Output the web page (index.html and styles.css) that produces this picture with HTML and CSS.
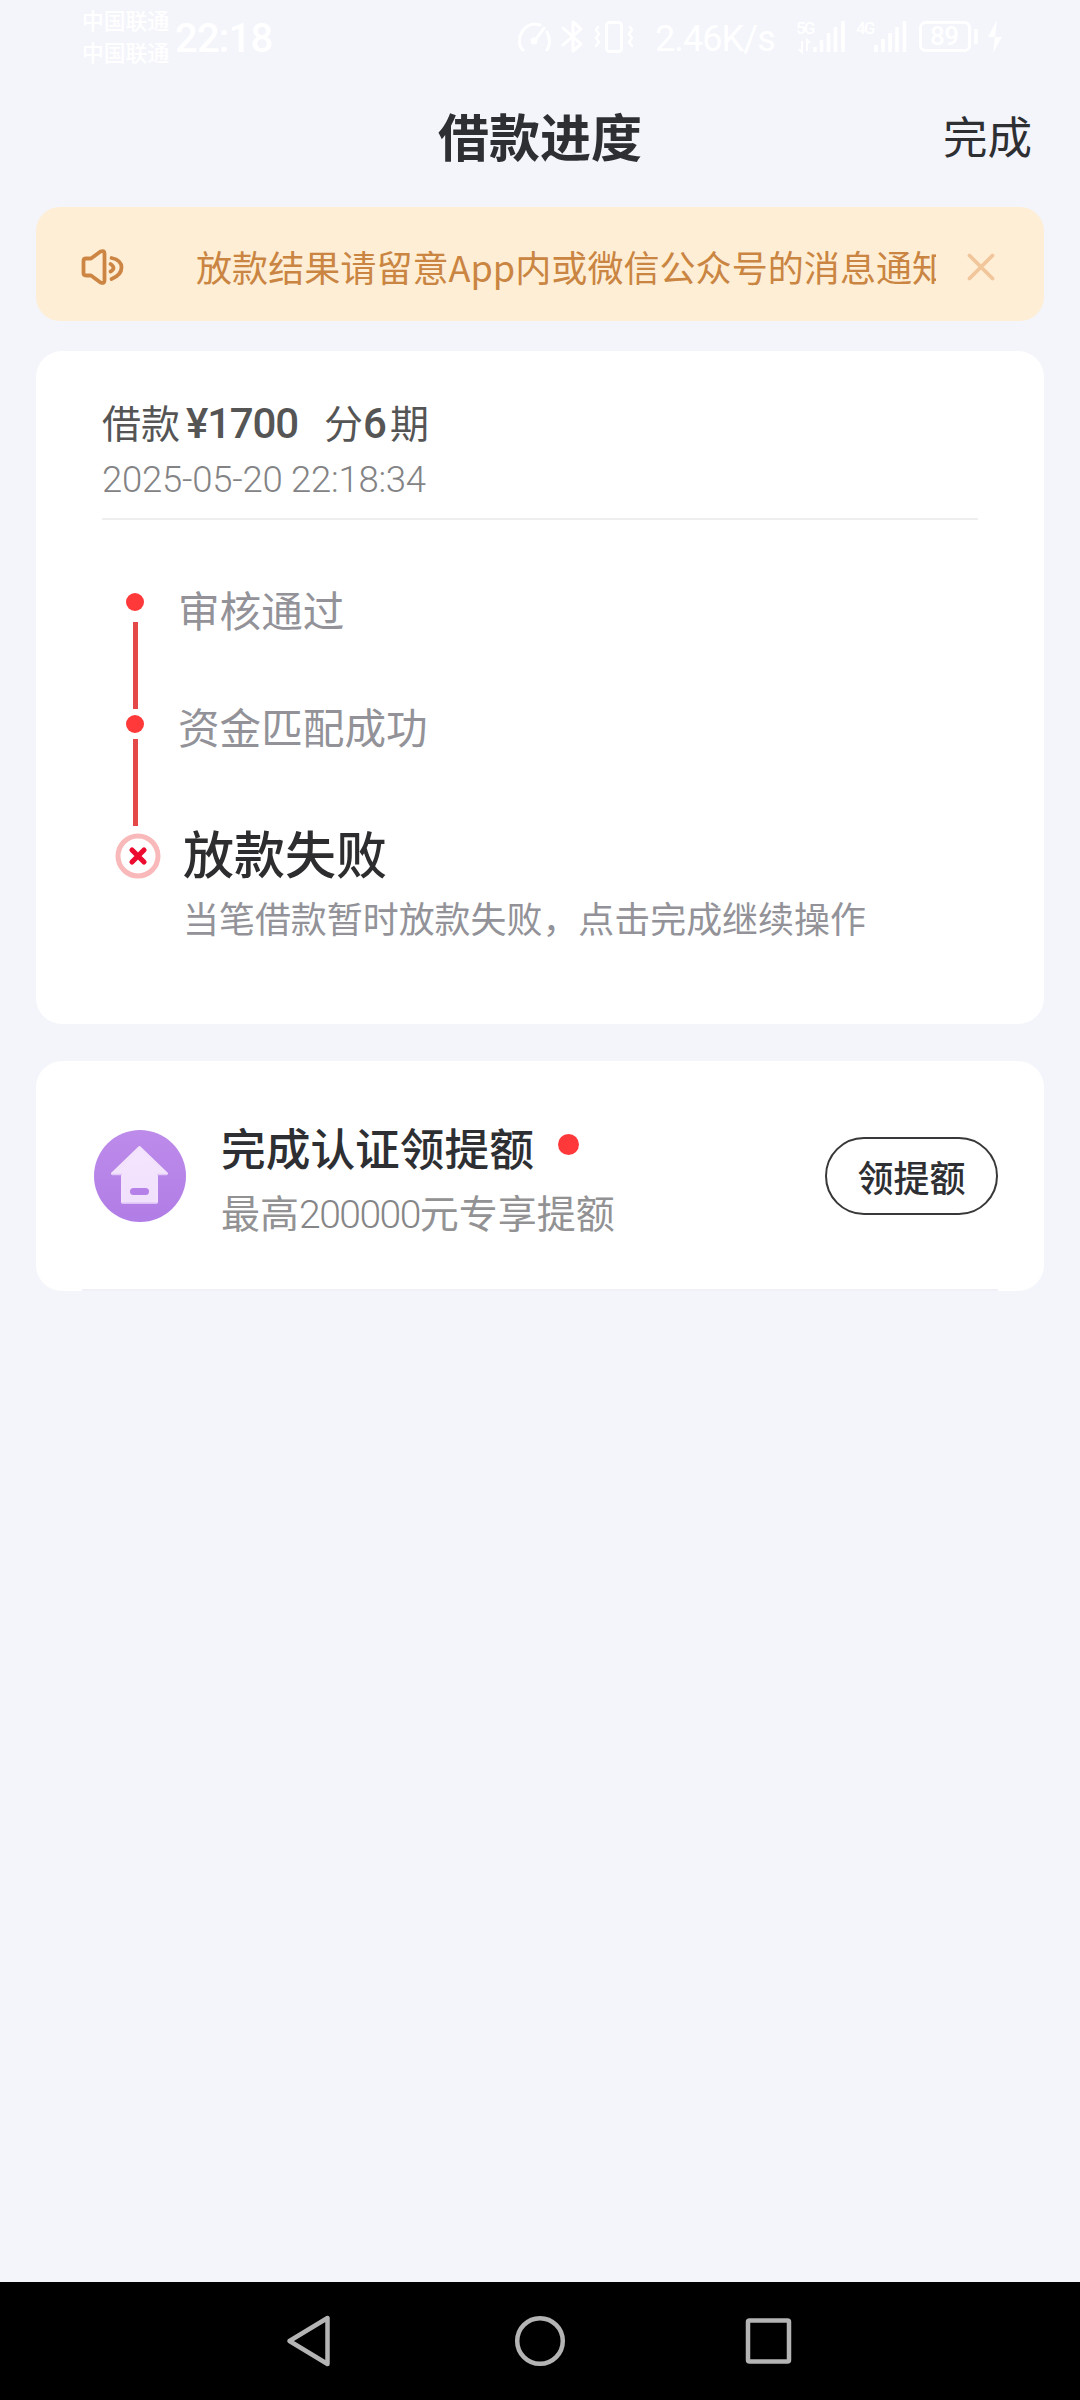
FILE: index.html
```html
<!DOCTYPE html>
<html lang="zh-CN">
<head>
<meta charset="utf-8">
<title>借款进度</title>
<link rel="stylesheet" href="styles.css">
</head>
<body>
<div class="statusbar">
  <div class="carriers"><span>中国联通</span><span>中国联通</span></div>
  <div class="clock">22:18</div>
  <svg class="status-left" width="116" height="36" viewBox="517 19 116 36" fill="none" stroke="#fff" stroke-width="3" stroke-linecap="round">
    <path d="M523 50 Q518 46 520 36 Q524 25 534 24 L540 25 M547 32 Q552 42 547 50 M534 42 L544 28"/>
    <circle cx="534" cy="41" r="2"/>
    <path d="M563 28 L581 44 L573 51 V22 L581 29 L563 45" stroke-linejoin="round"/>
    <rect x="606.500" y="22.500" width="15" height="29" rx="3"/>
    <path d="M598 27l-2 3 3 4-3 4 3 4-3 4M630 27l2 3-3 4 3 4-3 4 3 4" stroke-width="2.500"/>
  </svg>
  <div class="speed">2.46K/s</div>
  <svg class="status-right" width="208" height="36" viewBox="796 19 208 36" fill="none" stroke="#fff">
    <g class="net" fill="#fff" stroke="none"><text x="797" y="34">5G</text><text x="857" y="34">4G</text></g>
    <path d="M803 41v11l-3-3M808 51V40l3 3" stroke-width="2"/>
    <path d="M816 47v5M822.500 40v12M829.500 33v19M836.500 27v25M844 21v31M877 45v7M884 39v13M891 33v19M898 27v25M905.500 21v31" stroke-width="3.500"/>
    <rect x="921.500" y="22.500" width="49" height="28" rx="5" stroke-width="3"/>
    <path d="M977 29v15" stroke-width="3.500"/>
    <text class="charge" x="931" y="45" fill="#fff" stroke="none">89</text>
    <path d="M998 20 L989 37 H996 L994 53 L1003 37 H996Z" fill="#fff" stroke="none"/>
  </svg>
</div>

<header class="topbar"><h1>借款进度</h1><a class="done">完成</a></header>

<main>
  <section class="notice">
    <svg width="44" height="38" viewBox="81 248 44 38" fill="none" stroke="#cd8543" stroke-width="3.800" stroke-linejoin="round" stroke-linecap="round">
      <path d="M86 258.500h5l9.500-7q4-1.500 4 2v27q0 3.500-4 2l-9.500-7h-5q-2.500 0-2.500-2.500v-12q0-2.500 2.500-2.500Z"/>
      <path d="M111.500 258q10 2 10 9.500t-10 11.500M110.500 264q6 4 0 7.500"/>
    </svg>
    <p>放款结果请留意App内或微信公众号的消息通知</p>
    <svg width="28" height="28" viewBox="0 0 28 28" fill="none" stroke="#f1c69a" stroke-width="3.800" stroke-linecap="round"><path d="M2.500 2.500l23 23M25.500 2.500l-23 23"/></svg>
  </section>

  <section class="card progress">
    <div class="loan">
      <div class="loan-line"><span>借款</span><b class="amount">¥1700</b><span>分</span><b class="terms">6</b><span>期</span></div>
      <time>2025-05-20 22:18:34</time>
    </div>
    <ol class="steps">
      <li class="step"><div class="track"><i class="dot"></i><i class="bar"></i></div><p>审核通过</p></li>
      <li class="step second"><div class="track"><i class="dot"></i><i class="bar"></i></div><p>资金匹配成功</p></li>
      <li class="step failed">
        <svg width="46" height="46" viewBox="0 0 46 46" fill="none"><circle cx="23" cy="23" r="20" stroke="#f9b8b9" stroke-width="5"/><path d="M17 17l12 12M29 17L17 29" stroke="#ed0b30" stroke-width="5.200" stroke-linecap="round"/></svg>
        <div><h2>放款失败</h2><p>当笔借款暂时放款失败，点击完成继续操作</p></div>
      </li>
    </ol>
  </section>

  <section class="card offer">
    <svg width="92" height="92" viewBox="94 1130 92 92">
      <defs>
        <linearGradient id="disc" x1="0" y1="0" x2="0" y2="1"><stop offset="0" stop-color="#bd8bea"/><stop offset="1" stop-color="#b17de6"/></linearGradient>
        <linearGradient id="house" x1="0" y1="0" x2="0" y2="1"><stop offset="0" stop-color="#f5e5fd"/><stop offset="1" stop-color="#f1e0fc"/></linearGradient>
      </defs>
      <circle cx="140" cy="1176" r="46" fill="url(#disc)"/>
      <path d="M139.500 1147.500L166.500 1173.500H156.500V1202H122.500V1173.500H112.500Z" fill="url(#house)" stroke="#f2e2fc" stroke-width="3" stroke-linejoin="round"/>
      <path d="M112 1174.500h10M157 1174.500h10M122 1203h35" stroke="#e3c9f8" stroke-width="1.500"/>
      <rect x="130" y="1188" width="19" height="7" rx="3.500" fill="#b580e7"/>
    </svg>
    <div class="offer-text">
      <h3>完成认证领提额<i></i></h3>
      <p>最高<span>200000</span>元专享提额</p>
    </div>
    <button>领提额</button>
  </section>
</main>

<nav class="navbar">
  <svg width="52" height="54" viewBox="0 0 52 54"><path d="M42.500 4V50L4.500 27Z"/></svg>
  <svg width="52" height="54" viewBox="0 0 52 54"><circle cx="26" cy="27" r="22.800"/></svg>
  <svg width="52" height="54" viewBox="0 0 52 54"><rect x="5" y="6.500" width="41" height="41" rx="1.500"/></svg>
</nav>
</body>
</html>
```
FILE: styles.css
```css
* { box-sizing: border-box; margin: 0; padding: 0; }
body {
  width: 1080px;
  height: 2400px;
  display: flex;
  flex-direction: column;
  background: #f4f5fb;
  color: #2e2f33;
  font-family: "Noto Sans CJK SC", sans-serif;
  overflow: hidden;
}
svg { display: block; flex: none; }
i { font-style: normal; }
p, span, h1, h2, h3, b, time, a { white-space: nowrap; }

.statusbar {
  height: 80px;
  padding-left: 82px;
  display: flex;
  align-items: flex-start;
  color: #fff;
  font-family: Roboto, "Noto Sans CJK SC", sans-serif;
}
.carriers {
  width: 93px;
  padding-top: 4px;
  display: flex;
  flex-direction: column;
  font: 500 21.8px/32px "Noto Sans CJK SC", sans-serif;
}
.clock { width: 342px; font-size: 40px; font-weight: 500; line-height: 77px; letter-spacing: -0.8px; }
.status-left { margin-top: 19px; }
.speed { width: 140px; margin-left: 22px; font-size: 36px; line-height: 78px; letter-spacing: -.9px; }
.status-right { margin-top: 19px; }
.net { font-size: 17px; font-weight: 500; letter-spacing: -2px; }
.charge { font-size: 26px; font-weight: 500; letter-spacing: -.5px; }

.topbar {
  height: 127px;
  padding: 0 48px 17px;
  display: grid;
  grid-template-columns: 1fr auto 1fr;
  align-items: center;
}
.topbar h1 { grid-column: 2; font-size: 51px; line-height: 74px; font-weight: 700; }
.done { justify-self: end; font-size: 44.5px; line-height: 74px; }

main { flex: 1; padding: 0 36px; display: flex; flex-direction: column; }
.notice {
  height: 114px;
  padding: 5px 49px 0 45px;
  display: flex;
  align-items: center;
  background: #ffeed6;
  border-radius: 24px;
  color: #c98541;
}
.notice p { width: 740px; margin: 0 31px 0 71px; overflow: hidden; font-size: 36.1px; line-height: 60px; padding-bottom: 2px; }

.card { background: #fff; border-radius: 26px; }
.progress { height: 673px; margin-top: 30px; padding: 44px 66px 0; }
.loan { height: 125px; border-bottom: 2px solid #eee; }
.loan-line { height: 52px; display: flex; font-size: 39px; line-height: 52px; color: #555; }
.loan-line b { margin-top: 3px; font: 500 42px/52px Roboto, sans-serif; letter-spacing: -1.2px; }
.amount { width: 134px; padding-left: 6px; }
.amount + span { margin-left: 10px; }
.terms { width: 27px; }
time { display: block; margin-top: 11px; font: 300 36.500px/44px Roboto, sans-serif; letter-spacing: -.25px; color: #838385; }

.steps { list-style: none; padding: 73px 0 0 13px; }
.step { display: flex; height: 122px; font-size: 41.600px; line-height: 56px; color: #929298; }
.track { width: 40px; display: flex; flex-direction: column; align-items: center; }
.dot { width: 18px; height: 18px; border-radius: 50%; background: #ff3939; }
.bar { width: 5px; height: 87px; margin-top: 11px; background: #e44848; }
.step p { margin: -12px 0 0 23px; }
.second .bar { margin-top: 6px; }
.second p { margin-top: -17px; }
.failed svg { margin-top: -4px; }
.failed div { margin: -22px 0 0 22px; }
.failed h2 { font-size: 51px; font-weight: 500; line-height: 74px; color: #2d2d2f; }
.failed div p { margin: 1px 0 0; font-size: 35.950px; line-height: 54px; }

.offer {
  height: 230px;
  margin-top: 37px;
  padding: 0 46px 0 58px;
  display: flex;
  align-items: center;
  background: linear-gradient(#f0f0f6, #f0f0f6) 46px 100% / 916px 2px no-repeat #fff;
}
.offer-text { flex: 1; padding: 5px 0 0 35px; }
.offer h3 { display: flex; font-size: 44.700px; line-height: 64px; font-weight: 500; }
.offer h3 i { width: 21px; height: 21px; margin: 19px 0 0 24px; border-radius: 50%; background: #ff3939; }
.offer p { font-size: 39px; line-height: 64px; color: #929294; }
.offer p span { font: 300 39px/1 Roboto, sans-serif; letter-spacing: -1.500px; color: #858587; }
.offer button {
  width: 173px;
  height: 78px;
  border: 2px solid #38383a;
  border-radius: 39px;
  background: none;
  color: #2e2f33;
  font: 500 36px/70px "Noto Sans CJK SC", sans-serif;
}

.navbar {
  height: 118px;
  padding: 0 285px;
  display: flex;
  justify-content: space-between;
  align-items: center;
  background: #000;
}
.navbar svg { fill: none; stroke: #b4b4b4; stroke-width: 4.500px; stroke-linejoin: round; }
```
